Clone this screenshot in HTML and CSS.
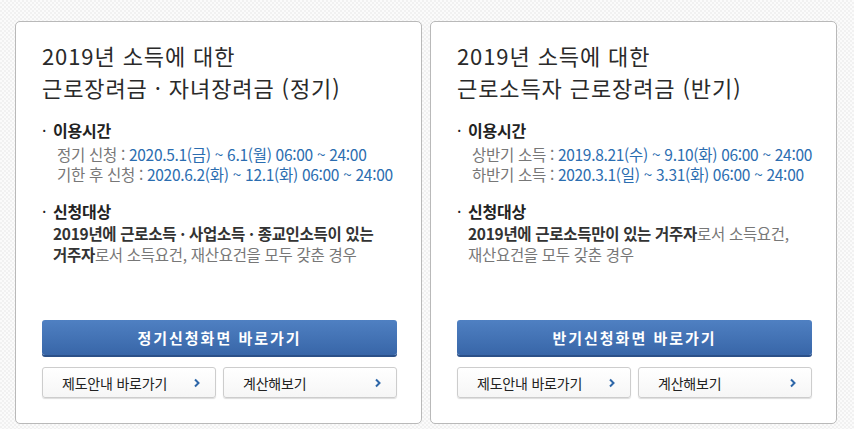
FILE: index.html
```html
<!DOCTYPE html>
<html lang="ko">
<head>
    <meta charset="utf-8">
    <title>근로장려금 신청</title>
    <link rel="stylesheet" href="styles.css">
</head>
<body>
    <div class="cards">
        <div class="card">
            <h2 class="title">2019년 소득에 대한<br>근로장려금 · 자녀장려금 (정기)</h2>

            <h3 class="head">이용시간</h3>
            <p class="row"><span class="label">정기 신청 : </span><span class="date">2020.5.1(금) ~ 6.1(월) 06:00 ~ 24:00</span></p>
            <p class="row"><span class="label">기한 후 신청 : </span><span class="date">2020.6.2(화) ~ 12.1(화) 06:00 ~ 24:00</span></p>

            <h3 class="head head-gap">신청대상</h3>
            <p class="desc"><b>2019년에 근로소득 · 사업소득 · 종교인소득이 있는<br>거주자</b>로서 소득요건, 재산요건을 모두 갖춘 경우</p>

            <div class="actions">
                <a class="btn-main" href="#">정기신청화면 바로가기</a>
                <div class="sub">
                    <a class="btn-sub" href="#">제도안내 바로가기
                        <svg width="8" height="10" viewBox="0 0 8 10"><polyline points="2,1.5 5.5,5 2,8.5" fill="none" stroke="#2d66a8" stroke-width="2"/></svg>
                    </a>
                    <a class="btn-sub" href="#">계산해보기
                        <svg width="8" height="10" viewBox="0 0 8 10"><polyline points="2,1.5 5.5,5 2,8.5" fill="none" stroke="#2d66a8" stroke-width="2"/></svg>
                    </a>
                </div>
            </div>
        </div>

        <div class="card">
            <h2 class="title">2019년 소득에 대한<br>근로소득자 근로장려금 (반기)</h2>

            <h3 class="head">이용시간</h3>
            <p class="row"><span class="label">상반기 소득 : </span><span class="date">2019.8.21(수) ~ 9.10(화) 06:00 ~ 24:00</span></p>
            <p class="row"><span class="label">하반기 소득 : </span><span class="date">2020.3.1(일) ~ 3.31(화) 06:00 ~ 24:00</span></p>

            <h3 class="head head-gap">신청대상</h3>
            <p class="desc"><b>2019년에 근로소득만이 있는 거주자</b>로서 소득요건,<br>재산요건을 모두 갖춘 경우</p>

            <div class="actions">
                <a class="btn-main" href="#">반기신청화면 바로가기</a>
                <div class="sub">
                    <a class="btn-sub" href="#">제도안내 바로가기
                        <svg width="8" height="10" viewBox="0 0 8 10"><polyline points="2,1.5 5.5,5 2,8.5" fill="none" stroke="#2d66a8" stroke-width="2"/></svg>
                    </a>
                    <a class="btn-sub" href="#">계산해보기
                        <svg width="8" height="10" viewBox="0 0 8 10"><polyline points="2,1.5 5.5,5 2,8.5" fill="none" stroke="#2d66a8" stroke-width="2"/></svg>
                    </a>
                </div>
            </div>
        </div>
    </div>
</body>
</html>
```

FILE: styles.css
```css
body {
    margin: 0;
    padding: 21px 15px;
    background: repeating-conic-gradient(#f1f1f1 0 25%, #fbfbfb 0 50%) 0 0 / 4px 4px;
    font-family: "Noto Sans CJK KR", "Noto Sans", sans-serif;
    color: #222;
}

.cards {
    display: flex;
    gap: 8px;
}

.card {
    width: 407px;
    height: 403px;
    box-sizing: border-box;
    display: flex;
    flex-direction: column;
    padding: 17px 24px 25px 26px;
    background: #fff;
    border: 1px solid #b9b9b9;
    border-radius: 5px;
}

.title {
    margin: 0;
    font-size: 22px;
    font-weight: normal;
    line-height: 32px;
    letter-spacing: 0.9px;
    color: #2a2a2a;
}

.head {
    position: relative;
    margin: 17px 0 4px;
    padding-left: 11px;
    font-size: 16px;
    line-height: 20px;
    letter-spacing: -0.2px;
    color: #222;
}

.head::before {
    content: "·";
    position: absolute;
    left: 0;
    font-weight: normal;
}

.head-gap {
    margin-top: 17px;
    margin-bottom: 2px;
}

.row {
    margin: 0;
    padding-left: 15px;
    font-size: 15.5px;
    line-height: 20px;
    letter-spacing: -0.3px;
    white-space: nowrap;
}

.label {
    color: #777;
}

.date {
    color: #2b6db0;
}

.desc {
    margin: 0;
    padding-left: 11px;
    font-size: 15.5px;
    line-height: 21px;
    letter-spacing: -0.3px;
    white-space: nowrap;
    color: #777;
}

.desc b {
    color: #333;
}

.actions {
    margin-top: auto;
}

.btn-main {
    display: block;
    height: 35px;
    line-height: 35px;
    text-align: center;
    border-radius: 3px;
    background: linear-gradient(#4f80c2, #3866a8);
    box-shadow: 0 2px 0 #2b5088;
    color: #fff;
    font-size: 15px;
    font-weight: bold;
    letter-spacing: 2px;
    text-decoration: none;
}

.sub {
    display: flex;
    gap: 7px;
    margin-top: 12px;
}

.btn-sub {
    flex: 1;
    height: 31px;
    box-sizing: border-box;
    display: flex;
    align-items: center;
    justify-content: space-between;
    padding: 0 14px 0 19px;
    border: 1px solid #cdcdcd;
    border-radius: 3px;
    background: linear-gradient(#fff, #f6f6f6);
    box-shadow: 0 1px 1px #ddd;
    color: #222;
    font-size: 14px;
    letter-spacing: -0.2px;
    text-decoration: none;
}
```
